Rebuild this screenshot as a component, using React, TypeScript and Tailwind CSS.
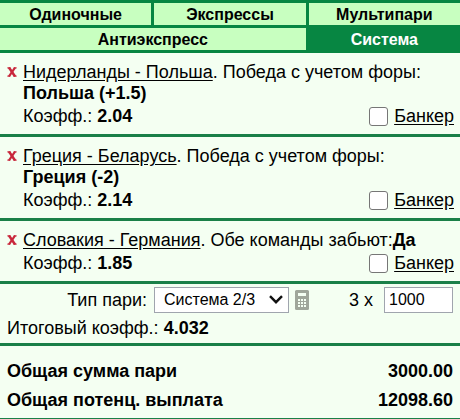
import { useState } from 'react'

const TOP_TABS = ['Одиночные', 'Экспрессы', 'Мультипари']

const BETS = [
  { id: 1, match: 'Нидерланды - Польша', market: 'Победа с учетом форы:', pick: 'Польша (+1.5)', odds: '2.04', wrap: true },
  { id: 2, match: 'Греция - Беларусь', market: 'Победа с учетом форы:', pick: 'Греция (-2)', odds: '2.14', wrap: true },
  { id: 3, match: 'Словакия - Германия', market: 'Обе команды забьют:', pick: 'Да', odds: '1.85', wrap: false },
]

function Tab({ label, active, onClick, className = '' }: {
  label: string
  active: boolean
  onClick: () => void
  className?: string
}) {
  return (
    <button
      onClick={onClick}
      className={`h-[22px] pt-[2px] text-center text-base font-bold leading-5 ${active ? 'bg-[#078642] text-white' : 'bg-[#c8ffc0] text-black'} ${className}`}
    >
      {label}
    </button>
  )
}

function CrossIcon() {
  return (
    <svg viewBox="0 0 10 10" className="h-[10px] w-[10px]" fill="none" stroke="#c8283c">
      <path d="M2 0.6 8 9.4" strokeWidth="2.6" />
      <path d="M8 0.6 2 9.4" strokeWidth="2.1" />
      <path d="M0.4 0.8h3M6.8 0.8h2.8M0.4 9.2h2.8M6.6 9.2h3" strokeWidth="1.2" />
    </svg>
  )
}

function CalculatorIcon() {
  return (
    <svg viewBox="0 0 14 20" className="h-5 w-[14px]">
      <rect width="14" height="20" rx="1.5" fill="#9fa69a" />
      <rect x="3" y="3" width="8" height="3" fill="#f4fff2" />
      {[9, 12, 15].map(y =>
        [3, 6, 9].map(x => <rect key={`${x}-${y}`} x={x} y={y} width="2" height="2" fill="#f4fff2" />)
      )}
    </svg>
  )
}

function BetRow({ bet }: { bet: (typeof BETS)[number] }) {
  return (
    <li className="flex border-b-3 border-[#1a8048] pt-[9px] pr-[6px] pb-[6px] pl-[7px]">
      <button aria-label="Удалить" className="mt-[5px] mr-[6px] h-[10px] w-[10px] shrink-0">
        <CrossIcon />
      </button>
      <div className="grow">
        <p className="leading-[21px]">
          <a href="#" className="underline underline-offset-2">{bet.match}</a>. {bet.market}
          {bet.wrap && <br />}
          <b>{bet.pick}</b>
        </p>
        <div className="flex h-6 items-center justify-between">
          <span>Коэфф.: <b>{bet.odds}</b></span>
          <div className="flex items-center gap-[6px]">
            <input
              id={`banker-${bet.id}`}
              type="checkbox"
              className="h-[19px] w-[19px] appearance-none rounded-[3px] border border-[#767676] bg-white checked:bg-[#078642]"
            />
            <label htmlFor={`banker-${bet.id}`} className="underline underline-offset-2">Банкер</label>
          </div>
        </div>
      </div>
    </li>
  )
}

export default function App() {
  const [tab, setTab] = useState('Система')
  const [stake, setStake] = useState('1000')

  return (
    <div className="border-b-3 border-[#1a8048] bg-[#f4fff2] font-['Liberation_Sans',Arial,sans-serif] text-lg text-black">
      {/* Bet kinds */}
      <div className="grid grid-cols-3 gap-[3px] border-y-3 border-[#078642] bg-[#078642]">
        {TOP_TABS.map(t => <Tab key={t} label={t} active={tab === t} onClick={() => setTab(t)} />)}
        <Tab label="Антиэкспресс" className="col-span-2" active={tab === 'Антиэкспресс'} onClick={() => setTab('Антиэкспресс')} />
        <Tab label="Система" active={tab === 'Система'} onClick={() => setTab('Система')} />
      </div>

      <ul>
        {BETS.map(bet => <BetRow key={bet.id} bet={bet} />)}
      </ul>

      {/* Stake */}
      <div className="border-b-3 border-[#1a8048] px-[7px] pt-[3px] pb-[3px]">
        <div className="flex h-[26px] items-center justify-end">
          <label htmlFor="kind" className="mr-[7px]">Тип пари:</label>
          <div className="relative">
            <select id="kind" className="block h-[26px] w-[135px] appearance-none border border-[#a0a5ae] bg-white pl-[9px] text-base">
              <option>Система 2/3</option>
            </select>
            <svg viewBox="0 0 14 9" className="pointer-events-none absolute top-2 right-[6px] h-[9px] w-[14px]" fill="none" stroke="#111" strokeWidth="2.4">
              <path d="M1 1.2 7 7.2 13 1.2" />
            </svg>
          </div>
          <button aria-label="Калькулятор" className="ml-[6px]"><CalculatorIcon /></button>
          <label htmlFor="stake" className="mr-[11px] ml-10">3 x</label>
          <input
            id="stake"
            value={stake}
            onChange={e => setStake(e.target.value)}
            className="h-[26px] w-[69px] border border-[#a0a5ae] bg-white px-1 text-base"
          />
        </div>
        <p className="mt-[3px] leading-6">Итоговый коэфф.: <b>4.032</b></p>
      </div>

      {/* Totals */}
      <dl className="px-[7px] pt-[11px] pb-[3px] font-bold leading-[29px]">
        <div className="flex justify-between">
          <dt>Общая сумма пари</dt>
          <dd>3000.00</dd>
        </div>
        <div className="flex justify-between">
          <dt>Общая потенц. выплата</dt>
          <dd>12098.60</dd>
        </div>
      </dl>
    </div>
  )
}
